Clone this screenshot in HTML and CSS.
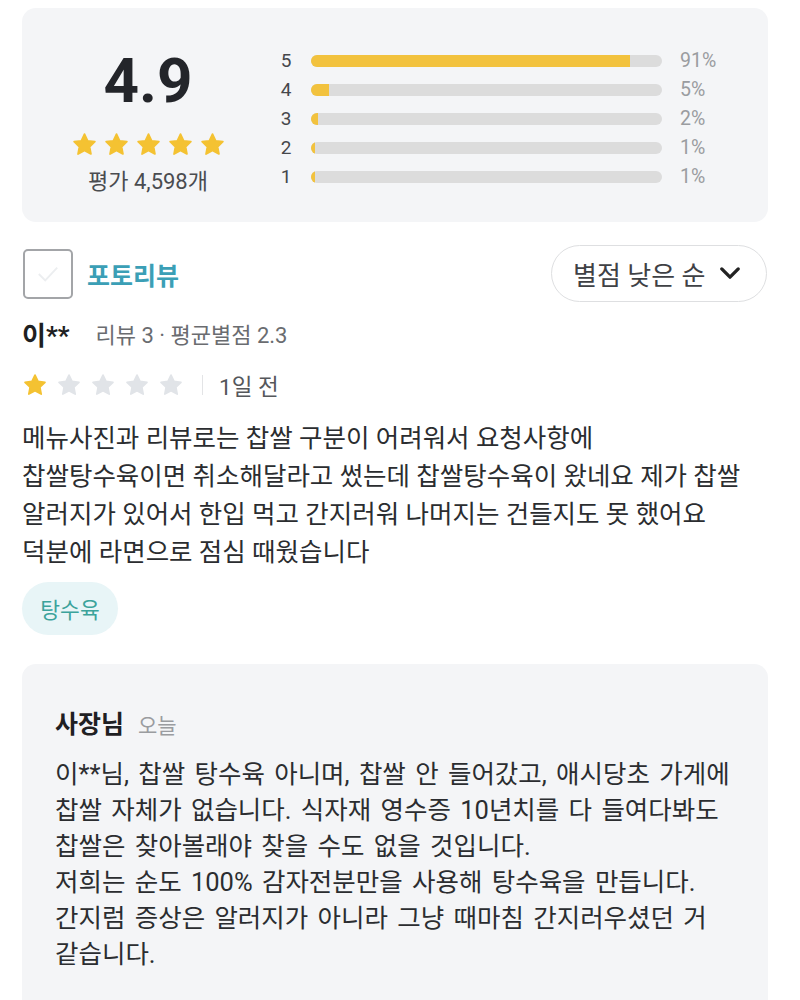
FILE: index.html
```html
<!DOCTYPE html>
<html lang="ko">
<head>
<meta charset="utf-8">
<title>리뷰</title>
<link rel="stylesheet" href="styles.css">
</head>
<body>
<div class="page">
  <section class="summary">
    <div class="score">
      <div class="score-num">4.9</div>
      <div class="stars big">
        <svg viewBox="0 0 24 24"><path class="on" d="M12 2.8l2.8 5.9 6.4.8-4.7 4.5 1.2 6.4L12 17.2l-5.7 3.2 1.2-6.4-4.7-4.5 6.4-.8z"/></svg>
        <svg viewBox="0 0 24 24"><path class="on" d="M12 2.8l2.8 5.9 6.4.8-4.7 4.5 1.2 6.4L12 17.2l-5.7 3.2 1.2-6.4-4.7-4.5 6.4-.8z"/></svg>
        <svg viewBox="0 0 24 24"><path class="on" d="M12 2.8l2.8 5.9 6.4.8-4.7 4.5 1.2 6.4L12 17.2l-5.7 3.2 1.2-6.4-4.7-4.5 6.4-.8z"/></svg>
        <svg viewBox="0 0 24 24"><path class="on" d="M12 2.8l2.8 5.9 6.4.8-4.7 4.5 1.2 6.4L12 17.2l-5.7 3.2 1.2-6.4-4.7-4.5 6.4-.8z"/></svg>
        <svg viewBox="0 0 24 24"><path class="on" d="M12 2.8l2.8 5.9 6.4.8-4.7 4.5 1.2 6.4L12 17.2l-5.7 3.2 1.2-6.4-4.7-4.5 6.4-.8z"/></svg>
      </div>
      <div class="score-count">평가 4,598개</div>
    </div>
    <div class="bars">
      <div class="bar-row"><span class="bar-label">5</span><div class="track"><div class="fill" style="width:91%"></div></div><span class="pct">91%</span></div>
      <div class="bar-row"><span class="bar-label">4</span><div class="track"><div class="fill" style="width:5%"></div></div><span class="pct">5%</span></div>
      <div class="bar-row"><span class="bar-label">3</span><div class="track"><div class="fill" style="width:2%"></div></div><span class="pct">2%</span></div>
      <div class="bar-row"><span class="bar-label">2</span><div class="track"><div class="fill" style="width:1%"></div></div><span class="pct">1%</span></div>
      <div class="bar-row"><span class="bar-label">1</span><div class="track"><div class="fill" style="width:1%"></div></div><span class="pct">1%</span></div>
    </div>
  </section>

  <div class="filter-row">
    <label class="photo-filter">
      <span class="checkbox"><svg viewBox="0 0 50 50"><path d="M15 25l7 7 13-14" /></svg></span>
      <span class="photo-label">포토리뷰</span>
    </label>
    <button class="sort-btn">별점 낮은 순<svg viewBox="0 0 24 16"><path d="M3 3l9 9 9-9"/></svg></button>
  </div>

  <article class="review">
    <div class="reviewer">
      <span class="name">이**</span>
      <span class="meta">리뷰 3 · 평균별점 2.3</span>
    </div>
    <div class="rating-row">
      <div class="stars small">
        <svg viewBox="0 0 24 24"><path class="on" d="M12 2.8l2.8 5.9 6.4.8-4.7 4.5 1.2 6.4L12 17.2l-5.7 3.2 1.2-6.4-4.7-4.5 6.4-.8z"/></svg>
        <svg viewBox="0 0 24 24"><path class="off" d="M12 2.8l2.8 5.9 6.4.8-4.7 4.5 1.2 6.4L12 17.2l-5.7 3.2 1.2-6.4-4.7-4.5 6.4-.8z"/></svg>
        <svg viewBox="0 0 24 24"><path class="off" d="M12 2.8l2.8 5.9 6.4.8-4.7 4.5 1.2 6.4L12 17.2l-5.7 3.2 1.2-6.4-4.7-4.5 6.4-.8z"/></svg>
        <svg viewBox="0 0 24 24"><path class="off" d="M12 2.8l2.8 5.9 6.4.8-4.7 4.5 1.2 6.4L12 17.2l-5.7 3.2 1.2-6.4-4.7-4.5 6.4-.8z"/></svg>
        <svg viewBox="0 0 24 24"><path class="off" d="M12 2.8l2.8 5.9 6.4.8-4.7 4.5 1.2 6.4L12 17.2l-5.7 3.2 1.2-6.4-4.7-4.5 6.4-.8z"/></svg>
      </div>
      <span class="divider"></span>
      <span class="date">1일 전</span>
    </div>
    <p class="review-text">메뉴사진과 리뷰로는 찹쌀 구분이 어려워서 요청사항에<br>찹쌀탕수육이면 취소해달라고 썼는데 찹쌀탕수육이 왔네요 제가 찹쌀<br>알러지가 있어서 한입 먹고 간지러워 나머지는 건들지도 못 했어요<br>덕분에 라면으로 점심 때웠습니다</p>
    <span class="tag">탕수육</span>
  </article>

  <section class="reply">
    <div class="reply-head">
      <span class="owner">사장님</span>
      <span class="reply-date">오늘</span>
    </div>
    <p class="reply-text">이**님, 찹쌀 탕수육 아니며, 찹쌀 안 들어갔고, 애시당초 가게에<br>찹쌀 자체가 없습니다. 식자재 영수증 10년치를 다 들여다봐도<br>찹쌀은 찾아볼래야 찾을 수도 없을 것입니다.<br>저희는 순도 100% 감자전분만을 사용해 탕수육을 만듭니다.<br>간지럼 증상은 알러지가 아니라 그냥 때마침 간지러우셨던 거<br>같습니다.</p>
  </section>
</div>
</body>
</html>
```

FILE: styles.css
```css
* {
  box-sizing: border-box;
}

body {
  margin: 0;
  background: #ffffff;
  font-family: Roboto, "Noto Sans CJK KR", "Noto Sans", sans-serif;
  color: #222222;
}

.page {
  padding: 8px 32px 0 22px;
  width: 800px;
}

/* summary card */
.summary {
  display: flex;
  height: 214px;
  background: #f4f5f7;
  border-radius: 14px;
}

.score {
  width: 252px;
  display: flex;
  flex-direction: column;
  align-items: center;
  padding-top: 42px;
}

.score-num {
  font-size: 62px;
  font-weight: 700;
  line-height: 62px;
  color: #23252a;
}

.stars {
  display: flex;
}

.stars svg path {
  stroke-linejoin: round;
  stroke-width: 1.6;
}

.stars path.on {
  fill: #f4c232;
  stroke: #f4c232;
}

.stars path.off {
  fill: #e1e4e8;
  stroke: #e1e4e8;
}

.stars.big {
  gap: 5px;
  margin-top: 19px;
}

.stars.big svg {
  width: 27px;
  height: 27px;
}

.score-count {
  margin-top: 11px;
  font-size: 22px;
  line-height: 26px;
  color: #4a4c50;
}

.bars {
  flex: 1;
  padding-top: 38px;
  padding-left: 5px;
  display: flex;
  flex-direction: column;
}

.bar-row {
  display: flex;
  align-items: center;
  height: 29px;
}

.bar-label {
  width: 14px;
  font-size: 19px;
  color: #45474b;
  text-align: center;
}

.track {
  margin-left: 18px;
  width: 351px;
  height: 12px;
  border-radius: 6px;
  background: #dcdcdc;
  overflow: hidden;
}

.fill {
  height: 100%;
  background: #f2c23e;
}

.pct {
  margin-left: 18px;
  font-size: 19.5px;
  color: #9a9ca0;
}

/* filter row */
.filter-row {
  margin-top: 23px;
  display: flex;
  justify-content: space-between;
  align-items: center;
  height: 57px;
}

.photo-filter {
  display: flex;
  align-items: center;
}

.checkbox {
  width: 50px;
  height: 50px;
  margin-left: 1px;
  border: 2px solid #a3a5a8;
  border-radius: 5px;
  display: flex;
}

.checkbox svg {
  width: 46px;
  height: 46px;
}

.checkbox path {
  fill: none;
  stroke: #eceef0;
  stroke-width: 2;
}

.photo-label {
  margin-left: 14px;
  font-size: 25px;
  font-weight: 700;
  color: #3b9fb6;
}

.sort-btn {
  display: flex;
  align-items: center;
  height: 57px;
  width: 216px;
  padding: 0 0 0 21px;
  border: 1.5px solid #dedfe1;
  border-radius: 29px;
  background: #ffffff;
  font-family: inherit;
  font-size: 26px;
  color: #3f4145;
  margin-right: 1px;
}

.sort-btn svg {
  width: 22px;
  height: 15px;
  margin-left: 13px;
}

.sort-btn path {
  fill: none;
  stroke: #222222;
  stroke-width: 3.6;
  stroke-linecap: round;
  stroke-linejoin: round;
}

/* review */
.review {
  display: flex;
  flex-direction: column;
  align-items: flex-start;
}

.reviewer {
  margin-top: 16px;
  display: flex;
  align-items: center;
  height: 30px;
}

.name {
  font-size: 26px;
  font-weight: 700;
  color: #1e1f22;
}

.meta {
  margin-left: 26px;
  font-size: 22px;
  color: #6a6c70;
}

.rating-row {
  margin-top: 24px;
  display: flex;
  align-items: center;
  height: 26px;
}

.stars.small {
  gap: 8px;
}

.stars.small svg {
  width: 26px;
  height: 26px;
}

.divider {
  width: 1px;
  height: 20px;
  background: #e3e4e6;
  margin-left: 18px;
}

.date {
  margin-left: 16px;
  font-size: 22.5px;
  color: #55575b;
}

.review-text {
  margin: 21px 0 0 0;
  font-size: 25.5px;
  line-height: 38px;
  color: #2b2d30;
  white-space: nowrap;
}

.tag {
  margin-top: 11px;
  display: flex;
  align-items: center;
  justify-content: center;
  width: 96px;
  height: 53px;
  border-radius: 27px;
  background: #e8f5f7;
  font-size: 21.5px;
  color: #3ba39b;
}

/* owner reply */
.reply {
  margin-top: 29px;
  background: #f4f5f7;
  border-radius: 14px 14px 0 0;
  padding: 40px 20px 40px 33px;
  min-height: 340px;
}

.reply-head {
  display: flex;
  align-items: baseline;
  height: 30px;
}

.owner {
  font-size: 25px;
  font-weight: 700;
  color: #1f2023;
}

.reply-date {
  margin-left: 14px;
  font-size: 21px;
  color: #9a9ca0;
}

.reply-text {
  margin: 22px 0 0 0;
  font-size: 25.5px;
  line-height: 36px;
  word-spacing: 3px;
  color: #2b2d30;
  white-space: nowrap;
}
```
